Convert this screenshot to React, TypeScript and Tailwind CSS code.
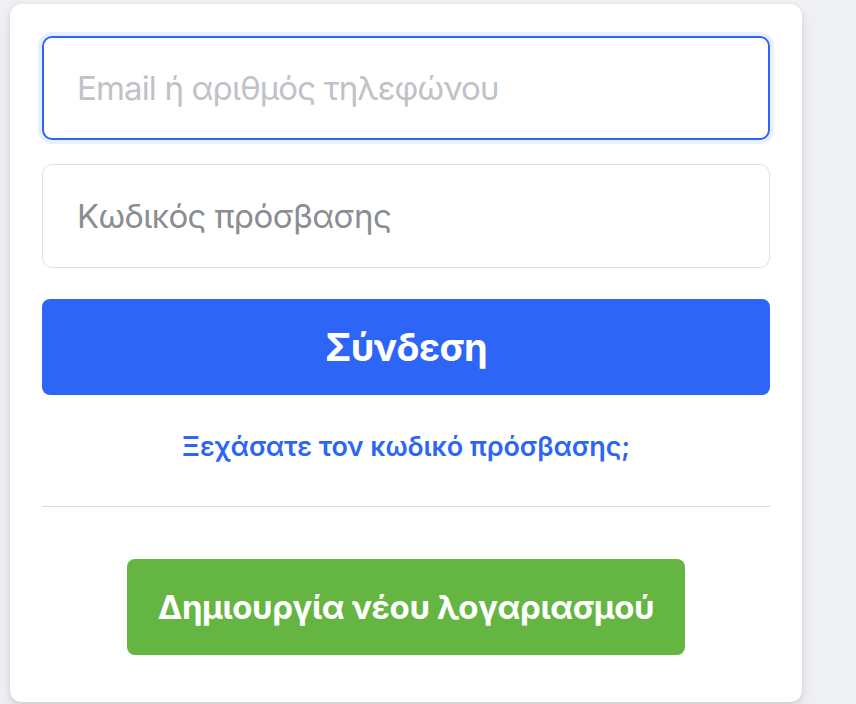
import React from "react";

export default function App() {
  const font = { fontFamily: "Inter, 'Noto Sans', 'DejaVu Sans', sans-serif" };
  return (
    <div className="min-h-[704px] w-[856px] bg-[#eef0f3] pl-[10px] pt-[4px]" style={font}>
      <div className="w-[792px] h-[698px] bg-white rounded-[12px] shadow-[0_2px_6px_rgba(0,0,0,0.1),0_8px_16px_rgba(0,0,0,0.06)] px-[32px] pt-[32px] flex flex-col">
        <div className="h-[104px] rounded-[10px] border-2 border-[#2d66f6] ring-4 ring-[#e8f0fd] flex items-center pl-[33px]">
          <span className="text-[33px] text-[#bfc2c7] leading-none tracking-[-0.85px]">Email ή αριθμός τηλεφώνου</span>
        </div>
        <div className="mt-[24px] h-[104px] rounded-[10px] border border-[#dddfe2] flex items-center pl-[34px]">
          <span className="text-[33px] text-[#8a8d91] leading-none tracking-[-0.6px]">Κωδικός πρόσβασης</span>
        </div>
        <div className="mt-[31px] h-[96px] rounded-[8px] bg-[#2d66f6] flex items-center justify-center">
          <span className="text-[38px] font-bold text-white leading-none tracking-[-0.6px]">Σύνδεση</span>
        </div>
        <div className="mt-[31px] h-[40px] flex items-center justify-center">
          <span className="text-[27px] font-semibold text-[#2d66f6] leading-none tracking-[-0.1px]">Ξεχάσατε τον κωδικό πρόσβασης;</span>
        </div>
        <div className="mt-[40px] h-px bg-[#dadde1]" />
        <div className="mt-[52px] flex justify-center">
          <div className="w-[558px] h-[96px] rounded-[8px] bg-[#65b543] flex items-center justify-center">
            <span className="text-[33px] font-bold text-white leading-none tracking-[-0.4px]">Δημιουργία νέου λογαριασμού</span>
          </div>
        </div>
      </div>
    </div>
  );
}
